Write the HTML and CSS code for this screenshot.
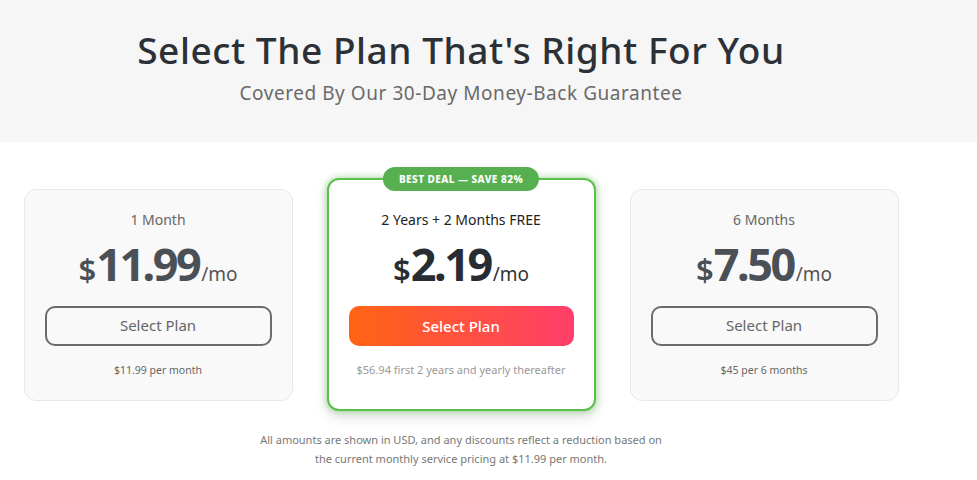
FILE: index.html
```html
<!DOCTYPE html>
<html>
<head>
<meta charset="utf-8">
<link rel="stylesheet" href="styles.css">
</head>
<body>
<header class="hero">
  <div class="wrap">
    <h1 class="title">Select The Plan That's Right For You</h1>
    <p class="subtitle">Covered By Our 30-Day Money-Back Guarantee</p>
  </div>
</header>
<main class="wrap">
  <div class="plans">
    <div class="card">
      <div class="plan-name">1 Month</div>
      <div class="price"><span class="cur">$</span><span class="amt">11.99</span><span class="per">/mo</span></div>
      <button class="btn">Select Plan</button>
      <div class="note">$11.99 per month</div>
    </div>
    <div class="card featured">
      <div class="badge">BEST DEAL — SAVE 82%</div>
      <div class="plan-name">2 Years + 2 Months FREE</div>
      <div class="price"><span class="cur">$</span><span class="amt">2.19</span><span class="per">/mo</span></div>
      <button class="btn btn-primary">Select Plan</button>
      <div class="note">$56.94 first 2 years and yearly thereafter</div>
    </div>
    <div class="card">
      <div class="plan-name">6 Months</div>
      <div class="price"><span class="cur">$</span><span class="amt">7.50</span><span class="per">/mo</span></div>
      <button class="btn">Select Plan</button>
      <div class="note">$45 per 6 months</div>
    </div>
  </div>
  <p class="disclaimer">All amounts are shown in USD, and any discounts reflect a reduction based on<br>the current monthly service pricing at $11.99 per month.</p>
</main>
</body>
</html>
```

FILE: styles.css
```css
* { box-sizing: border-box; }
html, body { margin: 0; padding: 0; background: #fff; }
body { font-family: "Noto Sans", "Open Sans", sans-serif; color: #666; }
.wrap { width: 922px; }
.hero { background: #f6f6f6; height: 142px; }
.hero .wrap { padding-top: 27px; text-align: center; }
.title { margin: 0; font-size: 37px; font-weight: 500; color: #2b3137; line-height: 46px; letter-spacing: 0.55px; }
.subtitle { margin: 8px 0 0; font-size: 19px; color: #6a6a6a; line-height: 24px; letter-spacing: 0.55px; }
.plans { display: flex; justify-content: center; align-items: center; gap: 34px; padding-top: 36px; }
.card { width: 269px; background: #f9f9f9; border: 1px solid #e8e8e8; border-radius: 12px; padding: 20px 20px 22px; text-align: center; position: relative; }
.card.featured { background: #fff; border: 2px solid #5bbf4c; padding: 30px 20px 31px; box-shadow: 0 0 6px 1px rgba(91,191,76,0.45), 0 6px 14px rgba(0,0,0,0.12); }
.badge { position: absolute; top: -13px; left: 50%; transform: translateX(-50%); background: #57b04f; color: #fff; font-size: 10px; font-weight: 800; letter-spacing: 0.45px; padding: 0 16px; height: 24px; line-height: 24px; border-radius: 12px; white-space: nowrap; }
.plan-name { font-size: 14px; line-height: 20px; color: #666; }
.featured .plan-name { color: #222; }
.price { margin-top: 9px; color: #4a5055; line-height: 50px; height: 50px; }
.featured .price { color: #272d33; }
.cur { font-size: 31px; font-weight: 600; }
.amt { font-size: 45px; font-weight: 700; letter-spacing: -2.5px; margin-right: 2px; }
.per { font-size: 19px; font-weight: 400; color: #555; }
.featured .per { color: #333; }
.btn { display: block; width: 100%; margin-top: 17px; height: 40px; border: 2px solid #6b6b6b; border-radius: 10px; background: transparent; font-family: inherit; font-size: 15px; color: #666; cursor: pointer; padding-bottom: 2px; }
.btn-primary { border: none; background: linear-gradient(90deg, #ff6414, #ff3e6b); color: #fff; font-weight: 500; }
.note { margin-top: 16px; font-size: 10.5px; line-height: 16px; color: #666; }
.featured .note { color: #999; font-size: 11px; }
.disclaimer { margin: 20px 0 0; text-align: center; font-size: 11px; line-height: 18.5px; color: #777; }
```
